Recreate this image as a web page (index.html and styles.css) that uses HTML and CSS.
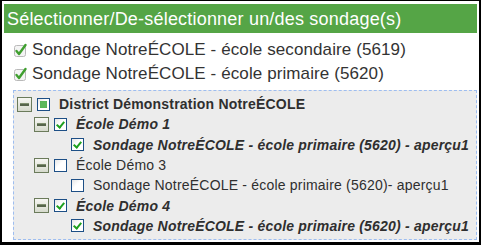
FILE: index.html
```html
<!DOCTYPE html>
<html lang="fr">
<head>
<meta charset="utf-8">
<title>Sélection des sondages</title>
<link rel="stylesheet" href="styles.css">
</head>
<body>
<div class="frame">
  <div class="header">Sélectionner/De-sélectionner un/des sondage(s)</div>
  <ul class="selected">
    <li><svg class="tick" viewBox="0 0 14 14" width="14" height="14"><rect x="0.5" y="2.5" width="11" height="11" rx="2" fill="#f4f4f4" stroke="#b9b9b9"/><path d="M2.5 8 L5 11 L11.5 2" fill="none" stroke="#3f9f2f" stroke-width="2.4" stroke-linecap="round" stroke-linejoin="round"/></svg>Sondage NotreÉCOLE - école secondaire (5619)</li>
    <li><svg class="tick" viewBox="0 0 14 14" width="14" height="14"><rect x="0.5" y="2.5" width="11" height="11" rx="2" fill="#f4f4f4" stroke="#b9b9b9"/><path d="M2.5 8 L5 11 L11.5 2" fill="none" stroke="#3f9f2f" stroke-width="2.4" stroke-linecap="round" stroke-linejoin="round"/></svg>Sondage NotreÉCOLE - école primaire (5620)</li>
  </ul>
  <div class="tree">
    <div class="node lvl0">
      <span class="exp"></span><span class="cb partial"></span><span class="label bold">District Démonstration NotreÉCOLE</span>
    </div>
    <div class="node lvl1">
      <span class="exp"></span><span class="cb checked"></span><span class="label bold italic">École Démo 1</span>
    </div>
    <div class="node lvl2">
      <span class="spacer"></span><span class="cb checked"></span><span class="label bold italic">Sondage NotreÉCOLE - école primaire (5620) - aperçu1</span>
    </div>
    <div class="node lvl1">
      <span class="exp"></span><span class="cb"></span><span class="label">École Démo 3</span>
    </div>
    <div class="node lvl2">
      <span class="spacer"></span><span class="cb"></span><span class="label">Sondage NotreÉCOLE - école primaire (5620)- aperçu1</span>
    </div>
    <div class="node lvl1">
      <span class="exp"></span><span class="cb checked"></span><span class="label bold italic">École Démo 4</span>
    </div>
    <div class="node lvl2">
      <span class="spacer"></span><span class="cb checked"></span><span class="label bold italic">Sondage NotreÉCOLE - école primaire (5620) - aperçu1</span>
    </div>
  </div>
</div>
</body>
</html>
```

FILE: styles.css
```css
html, body {
  margin: 0;
  padding: 0;
  background: #ffffff;
}

.frame {
  box-sizing: border-box;
  width: 481px;
  height: 245px;
  border-style: solid;
  border-color: #000000;
  border-width: 1px 2px 3px 2px;
  padding: 3px 2px 0 2px;
  font-family: "Liberation Sans", Arial, sans-serif;
  color: #333333;
  background: #ffffff;
  display: flex;
  flex-direction: column;
}

.header {
  flex: none;
  height: 29px;
  background: #55a546;
  color: #ffffff;
  font-size: 18px;
  letter-spacing: 0.2px;
  line-height: 30px;
  padding-left: 3px;
  white-space: nowrap;
}

.selected {
  list-style: none;
  margin: 0;
  padding: 5px 0 0 10px;
}

.selected li {
  height: 24px;
  display: flex;
  align-items: center;
  font-size: 17px;
  letter-spacing: 0.1px;
  white-space: nowrap;
}

.tick {
  margin-right: 4px;
  flex: none;
}

.tree {
  margin: 4px 0 2px 9px;
  flex: 1;
  border: 1px dashed #9dbdf0;
  background: #ececec;
  padding: 3px 0 0 3px;
}

.node {
  height: 20.3px;
  display: flex;
  align-items: center;
  font-size: 14px;
  letter-spacing: 0.2px;
  white-space: nowrap;
  color: #2f2f2f;
}

.lvl1 { padding-left: 17px; }
.lvl2 { padding-left: 34px; }

.exp, .spacer {
  flex: none;
  width: 15px;
  height: 15px;
  margin-right: 5px;
  box-sizing: border-box;
}

.exp {
  border: 1px solid #6b7b5b;
  background: linear-gradient(#f7f7f3, #d6dacd);
  position: relative;
}

.exp::after {
  content: "";
  position: absolute;
  left: 2px;
  right: 2px;
  top: 5px;
  height: 2px;
  background: #56654a;
  border-top: 1px solid #7e8e6e;
}

.cb {
  flex: none;
  width: 13px;
  height: 13px;
  box-sizing: border-box;
  border: 1px solid #1d4f86;
  background: linear-gradient(135deg, #e6e6e6, #ffffff 45%);
  margin-right: 9px;
  position: relative;
}

.cb.partial::after {
  content: "";
  position: absolute;
  left: 2px;
  top: 2px;
  width: 7px;
  height: 7px;
  background: #5cb85c;
  box-shadow: inset 0 0 1px #3f9a3f;
}

.cb.checked::after {
  content: "";
  position: absolute;
  left: 3px;
  top: 1px;
  width: 3px;
  height: 6px;
  border-right: 2px solid #1fa01f;
  border-bottom: 2px solid #1fa01f;
  transform: rotate(40deg);
}

.bold { font-weight: bold; }
.italic { font-style: italic; }
```
